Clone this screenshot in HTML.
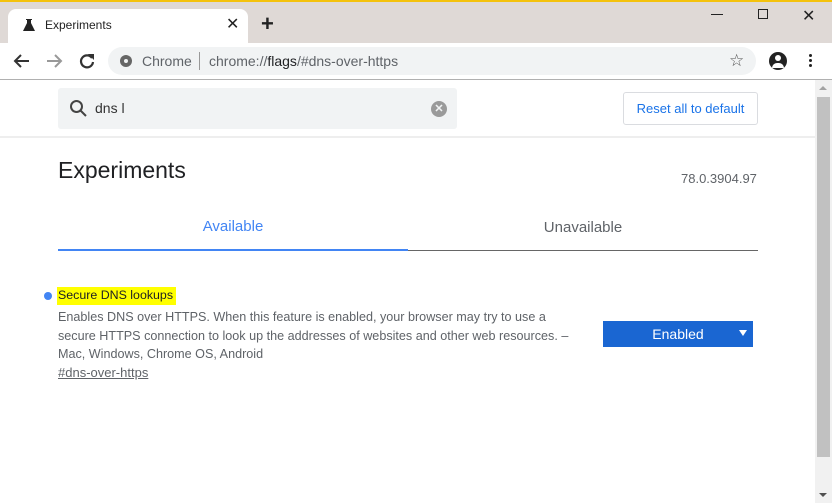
<!DOCTYPE html>
<html><head><style>
*{margin:0;padding:0;box-sizing:border-box}
body{width:832px;height:503px;overflow:hidden;background:#fff;font-family:"Liberation Sans",sans-serif;position:relative}
.a{position:absolute}
</style></head><body>
<div class="a" style="left:0;top:0;width:832px;height:2px;background:#f4c20d"></div>
<div class="a" style="left:0;top:2px;width:832px;height:41px;background:#dfd9d6"></div>
<div class="a" style="left:8px;top:9px;width:240px;height:34px;background:#fff;border-radius:8px 8px 0 0"></div>
<svg class="a" style="left:22px;top:18px" width="14" height="14" viewBox="0 0 14 14"><path d="M4 1h6v1H9v3l4 8H1l4-8V2H4z" fill="#222"/></svg>
<div class="a" style="left:45px;top:18px;font-size:12px;color:#222">Experiments</div>
<div class="a" style="left:226px;top:14px;font-size:16px;color:#222">✕</div>
<div class="a" style="left:261px;top:11px;font-size:22px;color:#222;font-weight:bold">+</div>
<div class="a" style="left:711px;top:14px;width:12px;height:1px;background:#222"></div>
<div class="a" style="left:758px;top:9px;width:10px;height:10px;border:1px solid #222"></div>
<div class="a" style="left:802px;top:6px;font-size:16px;color:#222">✕</div>
<svg class="a" style="left:13px;top:52px" width="18" height="18" viewBox="0 0 18 18"><path d="M16 9H3M8 3L2 9l6 6" fill="none" stroke="#333" stroke-width="2"/></svg>
<svg class="a" style="left:45px;top:52px" width="18" height="18" viewBox="0 0 18 18"><path d="M2 9h13M10 3l6 6-6 6" fill="none" stroke="#999" stroke-width="2"/></svg>
<svg class="a" style="left:78px;top:52px" width="18" height="18" viewBox="0 0 18 18"><path d="M14 6A6 6 0 1 0 15 10" fill="none" stroke="#333" stroke-width="2.2"/><path d="M10 2h6v6z" fill="#333"/></svg>
<div class="a" style="left:108px;top:47px;width:648px;height:28px;background:#f1f3f4;border-radius:14px"></div>
<div class="a" style="left:120px;top:55px;width:12px;height:12px;border-radius:50%;background:#666"></div>
<div class="a" style="left:124px;top:59px;width:4px;height:4px;border-radius:50%;background:#f1f3f4"></div>
<div class="a" style="left:142px;top:53px;font-size:14px;color:#5f6368">Chrome</div>
<div class="a" style="left:199px;top:52px;width:1px;height:18px;background:#999"></div>
<div class="a" style="left:209px;top:53px;font-size:14px;color:#5f6368">chrome://<span style="color:#202124">flags</span>/#dns-over-https</div>
<div class="a" style="left:729px;top:51px;font-size:17px;color:#555">☆</div>
<div class="a" style="left:769px;top:52px;width:18px;height:18px;border-radius:50%;background:#222"></div>
<div class="a" style="left:775px;top:55px;width:6px;height:6px;border-radius:50%;background:#fff"></div>
<div class="a" style="left:772px;top:63px;width:12px;height:5px;border-radius:6px 6px 0 0;background:#fff"></div>
<div class="a" style="left:809px;top:54px;width:3px;height:3px;background:#222;box-shadow:0 5px 0 #222,0 10px 0 #222;border-radius:50%"></div>
<div class="a" style="left:0;top:79px;width:832px;height:1px;background:#b0b0b0"></div>
<div class="a" style="left:0;top:136px;width:815px;height:2px;background:#eee"></div>
<div class="a" style="left:58px;top:88px;width:399px;height:41px;background:#f1f3f4;border-radius:3px"></div>
<svg class="a" style="left:69px;top:99px" width="20" height="20" viewBox="0 0 20 20"><circle cx="7.5" cy="7.5" r="5.5" fill="none" stroke="#444" stroke-width="2"/><path d="M11.5 11.5l5.5 5.5" stroke="#444" stroke-width="2"/></svg>
<div class="a" style="left:95px;top:100px;font-size:14px;color:#333">dns l</div>
<div class="a" style="left:431px;top:101px;width:16px;height:16px;border-radius:50%;background:#9a9a9a;color:#f1f3f4;font-size:11px;text-align:center;line-height:16px;font-weight:bold">✕</div>
<div class="a" style="left:623px;top:92px;width:135px;height:33px;border:1px solid #dadce0;border-radius:3px;color:#1a73e8;font-size:13px;text-align:center;line-height:31px">Reset all to default</div>
<div class="a" style="left:58px;top:157px;font-size:23px;color:#202124">Experiments</div>
<div class="a" style="left:681px;top:171px;font-size:13px;color:#5f6368">78.0.3904.97</div>
<div class="a" style="left:58px;top:218px;width:350px;text-align:center;font-size:15px;color:#4285f4">Available</div>
<div class="a" style="left:408px;top:219px;width:350px;text-align:center;font-size:15px;color:#5f6368">Unavailable</div>
<div class="a" style="left:58px;top:249px;width:350px;height:2px;background:#4285f4"></div>
<div class="a" style="left:408px;top:250px;width:350px;height:1px;background:#666"></div>
<div class="a" style="left:44px;top:292px;width:8px;height:8px;border-radius:50%;background:#4285f4"></div>
<div class="a" style="left:57px;top:287px;width:119px;height:18px;background:#ffff00"></div>
<div class="a" style="left:58px;top:288px;font-size:12.4px;color:#202124;white-space:nowrap">Secure DNS lookups</div>
<div class="a" style="left:58px;top:308px;font-size:12.6px;line-height:18.5px;color:#5f6368;width:560px;white-space:nowrap">Enables DNS over HTTPS. When this feature is enabled, your browser may try to use a<br>secure HTTPS connection to look up the addresses of websites and other web resources. –<br>Mac, Windows, Chrome OS, Android</div>
<div class="a" style="left:58px;top:365px;font-size:13px;color:#5f6368;text-decoration:underline">#dns-over-https</div>
<div class="a" style="left:603px;top:321px;width:150px;height:26px;background:#1a66d2;color:#fff;font-size:14px;line-height:26px;text-align:center">Enabled</div>
<div class="a" style="left:739px;top:330px;width:0;height:0;border-left:4px solid transparent;border-right:4px solid transparent;border-top:6px solid #fff"></div>
<div class="a" style="left:815px;top:80px;width:17px;height:423px;background:#f1f1f1"></div>
<div class="a" style="left:817px;top:97px;width:13px;height:360px;background:#c1c1c1"></div>
<div class="a" style="left:819px;top:86px;width:0;height:0;border-left:4px solid transparent;border-right:4px solid transparent;border-bottom:4px solid #a3a3a3"></div>
<div class="a" style="left:819px;top:493px;width:0;height:0;border-left:4px solid transparent;border-right:4px solid transparent;border-top:4px solid #505050"></div>
</body></html>
